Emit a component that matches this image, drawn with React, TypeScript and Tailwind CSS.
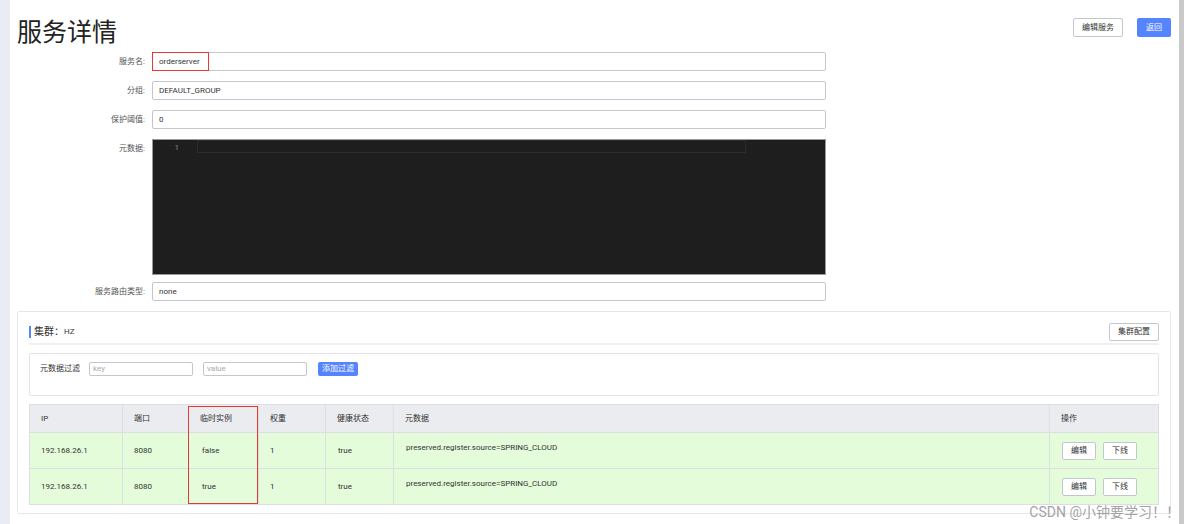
import React from "react";

const font = { fontFamily: 'Roboto, "Noto Sans CJK SC", sans-serif' };

const FormRow = ({
  label,
  top,
  children,
}: {
  label: string;
  top?: boolean;
  children: React.ReactNode;
}) => (
  <div className={`flex gap-[7px] ${top ? "items-start" : "items-center"}`}>
    <div className="w-[135px] text-right text-[8px] leading-[19px] text-[#555]">
      {label}
    </div>
    {children}
  </div>
);

const TextBox = ({ value, children }: { value: string; children?: React.ReactNode }) => (
  <div className="relative w-[674px] h-[19px] border border-[#c4c6cf] rounded-[2px] bg-white px-[6px] flex items-center text-[8px] text-[#333]">
    {value}
    {children}
  </div>
);

const rows = [
  { ip: "192.168.26.1", port: "8080", ephemeral: "false", weight: "1", healthy: "true" },
  { ip: "192.168.26.1", port: "8080", ephemeral: "true", weight: "1", healthy: "true" },
];

const SmallButton = ({ children }: { children: React.ReactNode }) => (
  <button className="h-[18px] px-[8px] border border-[#c4c6cf] rounded-[2px] bg-white text-[8px] text-[#333]">
    {children}
  </button>
);

export default function App() {
  return (
    <div className="relative flex w-[1184px] h-[524px] bg-white overflow-hidden" style={font}>
      <div className="w-[10px] shrink-0 bg-[#e9ecf2]" />

      <div className="flex-1 flex flex-col">
        {/* header */}
        <div className="h-[52px] flex justify-between items-start pl-[7px] pr-[8px]">
          <h1 className="mt-[18px] text-[25px] leading-[30px] text-[#222] font-normal">服务详情</h1>
          <div className="mt-[18px] flex gap-[14px]">
            <button className="h-[19px] w-[50px] border border-[#c4c6cf] rounded-[2px] bg-white text-[8px] text-[#333]">
              编辑服务
            </button>
            <button className="h-[19px] w-[34px] rounded-[2px] bg-[#5584ff] text-[8px] text-white">
              返回
            </button>
          </div>
        </div>

        {/* form */}
        <div className="flex flex-col gap-[10px]">
          <FormRow label="服务名:">
            <TextBox value="orderserver">
              <div className="absolute -inset-y-px -left-px w-[57px] border border-[#e53935]" />
            </TextBox>
          </FormRow>
          <FormRow label="分组:">
            <TextBox value="DEFAULT_GROUP" />
          </FormRow>
          <FormRow label="保护阈值:">
            <TextBox value="0" />
          </FormRow>
          <FormRow label="元数据:" top>
            <div className="w-[674px] h-[136px] bg-[#1e1e1e] border border-[#9a9a9a] flex">
              <div className="w-[44px] pt-[2px] text-right pr-[18px] text-[8px] leading-[11px] text-[#858585]">1</div>
              <div className="w-[549px] h-[13px] border border-[#2c2c2c]" />
            </div>
          </FormRow>
        </div>
        <div className="mt-[7px]">
          <FormRow label="服务路由类型:">
            <TextBox value="none" />
          </FormRow>
        </div>

        {/* cluster panel */}
        <div className="mt-[10px] ml-[7px] mr-[8px] border border-[#e6e7eb] rounded-[2px] px-[11px] pt-[10px] pb-[8px]">
          <div className="flex items-center justify-between h-[19px]">
            <div className="flex items-center">
              <div className="w-[2px] h-[12px] bg-[#5584ff]" />
              <span className="ml-[3px] text-[10px] text-[#333]">集群：</span>
              <span className="text-[8px] text-[#333]">HZ</span>
            </div>
            <SmallButton>集群配置</SmallButton>
          </div>
          <div className="mt-[2px] h-[2px] bg-[#eef0f4]" />

          <div className="mt-[8px] h-[43px] border border-[#e3e4e8] rounded-[2px] pl-[10px] pt-[8px]">
            <div className="flex items-center h-[14px]">
              <span className="text-[8px] text-[#333]">元数据过滤</span>
              <div className="ml-[9px] w-[104px] h-[14px] border border-[#c4c6cf] rounded-[2px] px-[3px] text-[8px] leading-[12px] text-[#aaa]">key</div>
              <div className="ml-[10px] w-[104px] h-[14px] border border-[#c4c6cf] rounded-[2px] px-[3px] text-[8px] leading-[12px] text-[#aaa]">value</div>
              <button className="ml-[11px] h-[14px] px-[4px] rounded-[2px] bg-[#5584ff] text-[8px] leading-[14px] text-white">添加过滤</button>
            </div>
          </div>

          <div className="relative mt-[8px]">
            <table className="w-full table-fixed border-collapse text-[8px] text-[#333]">
              <colgroup>
                <col className="w-[93px]" />
                <col className="w-[66px]" />
                <col className="w-[70px]" />
                <col className="w-[67px]" />
                <col className="w-[68px]" />
                <col />
                <col className="w-[109px]" />
              </colgroup>
              <thead>
                <tr className="h-[28px] bg-[#ebecf0]">
                  {["IP", "端口", "临时实例", "权重", "健康状态", "元数据", "操作"].map((h) => (
                    <th key={h} className="text-left font-normal pl-[11px] border border-[#dcdee3]">
                      {h}
                    </th>
                  ))}
                </tr>
              </thead>
              <tbody>
                {rows.map((r, i) => (
                  <tr key={i} className="h-[36px] bg-[#e4fcda]">
                    <td className="pl-[11px] border border-[#dcdee3]">{r.ip}</td>
                    <td className="pl-[11px] border border-[#dcdee3]">{r.port}</td>
                    <td className="pl-[13px] border border-[#dcdee3]">{r.ephemeral}</td>
                    <td className="pl-[11px] border border-[#dcdee3]">{r.weight}</td>
                    <td className="pl-[12px] border border-[#dcdee3]">{r.healthy}</td>
                    <td className="pl-[12px] pb-[6px] border border-[#dcdee3]">
                      preserved.register.source=SPRING_CLOUD
                    </td>
                    <td className="pl-[12px] border border-[#dcdee3]">
                      <div className="flex gap-[7px]">
                        <SmallButton>编辑</SmallButton>
                        <SmallButton>下线</SmallButton>
                      </div>
                    </td>
                  </tr>
                ))}
              </tbody>
            </table>
            <div className="absolute left-[159px] top-[2px] w-[70px] h-[98px] border border-[#e53935] pointer-events-none" />
          </div>
        </div>
      </div>

      <div className="w-[5px] shrink-0 bg-[#c9c9c9]" />

      <div className="absolute right-[4px] bottom-[3px] text-[14px] leading-[17px] text-[#9a9a9a] opacity-90">
        CSDN @小钟要学习！！
      </div>
    </div>
  );
}
